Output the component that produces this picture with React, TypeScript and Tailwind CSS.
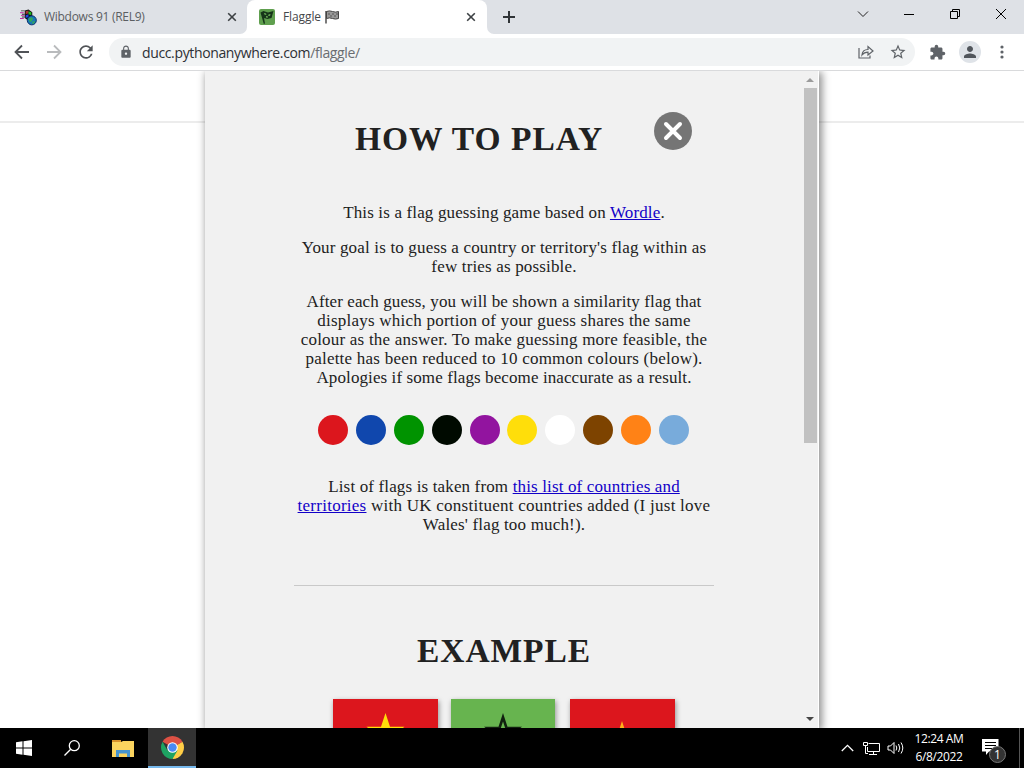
import { ReactNode } from "react";
import { MdExtension, MdLock, MdPerson, MdRefresh, MdStarBorder } from "react-icons/md";

const COLOURS = [
  "bg-[#dc161d]",
  "bg-[#1047ad]",
  "bg-[#009300]",
  "bg-[#000a00]",
  "bg-[#92149f]",
  "bg-[#ffde0a]",
  "bg-[#ffffff]",
  "bg-[#7d4300]",
  "bg-[#ff8216]",
  "bg-[#78abdb]",
];

const TabClose = () => (
  <svg width="10" height="10" viewBox="0 0 10 10" stroke="#3c4043" strokeWidth="1.6">
    <path d="M1.2 1.2l7.6 7.6M8.8 1.2L1.2 8.8" />
  </svg>
);

const GlobeIcon = () => (
  <svg width="17" height="17" viewBox="0 0 18 17">
    <path d="M5 1l4-1 4 3v8l-4 1-4-3z" fill="#111" />
    <path d="M0 3h4v1H0zM1 6h4v1H1zM0 9h4v1H0z" fill="#c22ba0" />
    <path d="M1 1h4v1H1zM2 4.500h3v1H2zM2 7.500h3v1H2z" fill="#333" />
    <path d="M6 2l3-1v3L6 5z" fill="#a33" />
    <path d="M9 2l3 1v3L9 5z" fill="#2b2" />
    <path d="M6 6l3-1v3L6 9z" fill="#24d" />
    <circle cx="12.500" cy="11.500" r="4.800" fill="#1678b8" stroke="#092c66" />
    <path d="M9 10l3-2 2 2-2 3-2 0zM13 13l3-1-1 2.500-2 1z" fill="#33a65a" />
  </svg>
);

const FlagFavicon = () => (
  <svg width="16" height="16" viewBox="0 0 16 16">
    <rect width="16" height="16" rx="2" fill="#5f9f4e" />
    <path d="M1.500 3.500l3-1.500 4.500 1.500 5.500-1.500-2 7-4 1-3.500-1 1 5.500-1.200.5z" fill="#17351a" />
    <path d="M5 4l2 .5.4 1.500-2-.5zM9.500 5.500l2-.4-.4 1.600-1.900.3zM7 7l2 .5-.3 1.300L7 8.400z" fill="#6db35a" />
  </svg>
);

const ChequeredFlag = () => (
  <svg width="15" height="14" viewBox="0 0 15 14">
    <path d="M1 1v12.500" stroke="#333" strokeWidth="1.300" />
    <path d="M1.500 1.500q3-1.200 6 0t6 0v7q-3 1.200-6 0t-6 0z" fill="#999" stroke="#444" strokeWidth="1" />
    <path d="M3 3h2v2H3zM7 3h2v2H7zM11 3h2v2h-2zM5 5h2v2H5zM9 5h2v2H9z" fill="#777" />
  </svg>
);

const TabStrip = () => (
  <div className="flex h-[34px] bg-[#dee1e6] text-[12px]">
    <div className="flex w-[247px] items-center pl-5 text-[#5b5e62]">
      <GlobeIcon />
      <span className="ml-[7px] w-[183px] tracking-[-0.28px]">Wibdows 91 (REL9)</span>
      <TabClose />
    </div>
    <div className="relative flex w-60 items-center rounded-t-lg bg-white pl-3 text-[#45484b]">
      <svg width="7" height="7" viewBox="0 0 7 7" fill="#fff" className="absolute bottom-0 -left-[7px]">
        <path d="M7 0v7H0a7 7 0 0 0 7-7z" />
      </svg>
      <svg width="7" height="7" viewBox="0 0 7 7" fill="#fff" className="absolute -right-[7px] bottom-0">
        <path d="M0 0v7h7a7 7 0 0 1-7-7z" />
      </svg>
      <FlagFavicon />
      <span className="ml-2 w-[42px] tracking-[-0.1px]">Flaggle</span>
      <ChequeredFlag />
      <span className="ml-[126px]">
        <TabClose />
      </span>
    </div>
    <div className="flex flex-1 items-center pl-4">
      <svg width="12" height="12" viewBox="0 0 12 12" stroke="#303437" strokeWidth="2">
        <path d="M6 0v12M0 6h12" />
      </svg>
      <div className="ml-auto flex pb-[6px]">
        <svg width="12" height="12" viewBox="0 0 12 12" fill="none" stroke="#222" className="mr-[34px]">
          <path d="M1 3.500l5 5 5-5" />
        </svg>
        <svg width="12" height="12" viewBox="0 0 12 12" stroke="#000" className="mr-[34px]">
          <path d="M1 6.500h10" />
        </svg>
        <svg width="12" height="12" viewBox="0 0 12 12" fill="none" stroke="#000" className="mr-[34px]">
          <path d="M1.500 3.500h7v7h-7zM3.500 3V1.500h7v7H9" />
        </svg>
        <svg width="12" height="12" viewBox="0 0 12 12" stroke="#000" className="mr-[17px]">
          <path d="M1 1l10 10M11 1L1 11" />
        </svg>
      </div>
    </div>
  </div>
);

const Toolbar = () => (
  <div className="flex h-[37px] items-center border-b border-[#d9dadc] bg-white">
    <svg width="16" height="16" viewBox="0 0 16 16" fill="none" stroke="#505357" strokeWidth="1.8" className="ml-[14px]">
      <path d="M15 8H2M8 1.500L1.500 8 8 14.500" />
    </svg>
    <svg width="16" height="16" viewBox="0 0 16 16" fill="none" stroke="#b9bbbd" strokeWidth="1.8" className="ml-4">
      <path d="M1 8h13M8 1.500L14.500 8 8 14.500" />
    </svg>
    <MdRefresh size={20} className="ml-[14px] text-[#505357]" />
    <div className="ml-[13px] flex h-7 w-[806px] items-center rounded-full bg-[#f1f3f4] pl-[10px]">
      <MdLock size={14} className="text-[#5f6368]" />
      <span className="ml-[9px] text-[14px] tracking-[-0.36px] text-[#2d3034]">
        ducc.pythonanywhere.com<span className="text-[#6a6d71]">/flaggle/</span>
      </span>
      <svg width="16" height="14" viewBox="0 0 16 14" fill="none" stroke="#5f6368" strokeWidth="1.2" className="mr-[15px] ml-auto">
        <path d="M1 3v10h11v-2.500" />
        <path d="M4 10c.3-4 2.500-5.500 6-5.500V1.500L15 6l-5 4V7.200C7 7.200 5.500 8 4 10z" />
      </svg>
      <MdStarBorder size={18} className="mr-2 text-[#5f6368]" />
    </div>
    <MdExtension size={17} className="ml-[14px] text-[#5f6368]" />
    <div className="ml-[13px] flex size-[22px] items-center justify-center rounded-full bg-[#dfe3e8]">
      <MdPerson size={18} className="text-[#51565c]" />
    </div>
    <svg width="4" height="14" viewBox="0 0 4 14" fill="#5f6368" className="ml-[19px]">
      <circle cx="2" cy="2" r="1.6" />
      <circle cx="2" cy="7" r="1.6" />
      <circle cx="2" cy="12" r="1.6" />
    </svg>
  </div>
);

const Link = ({ children }: { children: ReactNode }) => (
  <a href="#" className="text-[#1200c8] underline">
    {children}
  </a>
);

const STAR =
  "0,-20 4.49,-6.18 19.02,-6.18 7.27,2.36 11.76,16.18 0,7.64 -11.76,16.18 -7.27,2.36 -19.02,-6.18 -4.49,-6.18";

const Modal = () => (
  <div className="absolute top-0 left-[205px] flex h-[657px] w-[614px] bg-[#f1f1f1] shadow-[2px_2px_8px_1px_rgba(0,0,0,0.45)]">
    <div className="h-full w-[597px] overflow-hidden pl-[89px] font-['Liberation_Serif',serif] text-[17px] leading-[19px] text-[#212121]">
      <div className="flex w-[420px] flex-col text-center whitespace-nowrap">
        <div className="flex h-[132px] pt-[41px]">
          <h1 className="ml-[61px] w-[250px] pt-[7px] text-left text-[33.500px] leading-[40px] font-bold tracking-[1px]">
            HOW TO PLAY
          </h1>
          <svg width="38" height="38" viewBox="0 0 38 38" className="ml-[49px]">
            <circle cx="19" cy="19" r="19" fill="#757575" />
            <path d="M12 12l14 14M26 12l-14 14" stroke="#fff" strokeWidth="4" strokeLinecap="round" />
          </svg>
        </div>
        <p className="tracking-[0.145px]">
          This is a flag guessing game based on <Link>Wordle</Link>.
        </p>
        <p className="mt-4 tracking-[0.165px]">
          Your goal is to guess a country or territory's flag within as
          <br />
          few tries as possible.
        </p>
        <p className="mt-4">
          <span className="tracking-[0.11px]">After each guess, you will be shown a similarity flag that</span>
          <br />
          <span className="tracking-[0.225px]">displays which portion of your guess shares the same</span>
          <br />
          <span className="tracking-[0.21px]">colour as the answer. To make guessing more feasible, the</span>
          <br />
          <span className="tracking-[0.23px]">palette has been reduced to 10 common colours (below).</span>
          <br />
          <span className="tracking-[0.1px]">Apologies if some flags become inaccurate as a result.</span>
        </p>
        <div className="mt-[28px] flex justify-between pr-[25px] pl-6">
          {COLOURS.map((c) => (
            <div key={c} className={`size-[30px] rounded-full ${c}`} />
          ))}
        </div>
        <p className="mt-[32px]">
          <span className="tracking-[0.145px]">
            List of flags is taken from <Link>this list of countries and</Link>
          </span>
          <br />
          <span className="tracking-[0.255px]">
            <Link>territories</Link> with UK constituent countries added (I just love
          </span>
          <br />
          <span className="tracking-[0.17px]">Wales' flag too much!).</span>
        </p>
        <hr className="mt-[51px] border-[#c9c9c9]" />
        <h1 className="mt-[45px] text-[33.500px] leading-[40px] font-bold tracking-[0.9px]">EXAMPLE</h1>
        <div className="mt-[28px] flex pl-[39px]">
          <svg width="105" height="70" className="bg-[#dc161d] shadow-[1px_2px_5px_rgba(0,0,0,0.4)]">
            <polygon points={STAR} transform="translate(52.5 34)" fill="#ffde0a" />
          </svg>
          <svg width="104" height="70" className="ml-[13px] bg-[#67b44f] shadow-[1px_2px_5px_rgba(0,0,0,0.4)]">
            <polygon points={STAR} transform="translate(52 34)" fill="#11200f" />
            <polygon points={STAR} transform="translate(52 38) scale(.78)" fill="#67b44f" />
          </svg>
          <svg width="105" height="70" className="ml-[15px] bg-[#dc161d] shadow-[1px_2px_5px_rgba(0,0,0,0.4)]">
            <polygon points={STAR} transform="translate(52 42)" fill="#ffb01a" />
          </svg>
        </div>
      </div>
    </div>
    <div className="flex w-[17px] flex-col items-center border-r border-white bg-[#f1f1f1] pt-[7px] pb-[7px]">
      <svg width="8" height="4" viewBox="0 0 8 4" fill="#9b9b9b">
        <path d="M0 4l4-4 4 4z" />
      </svg>
      <div className="mt-[6px] h-[355px] w-[13px] bg-[#c1c1c1]" />
      <svg width="8" height="4" viewBox="0 0 8 4" fill="#454545" className="mt-auto">
        <path d="M0 0l4 4 4-4z" />
      </svg>
    </div>
  </div>
);

const Taskbar = () => (
  <div className="flex h-10 items-center bg-black text-white">
    <svg width="16" height="16" viewBox="0 0 16 16" fill="#fff" className="ml-4">
      <path d="M0 2.200l6.500-.9v6.200H0zM7.500 1.200L16 0v7.500H7.500zM0 8.500h6.500v6.200L0 13.800zM7.500 8.500H16V16l-8.500-1.200z" />
    </svg>
    <svg width="16" height="16" viewBox="0 0 16 16" fill="none" stroke="#fff" strokeWidth="1.300" className="ml-8">
      <circle cx="10.300" cy="5.700" r="5" />
      <path d="M6.700 9.300L.5 15.500" />
    </svg>
    <svg width="22" height="19" viewBox="0 0 22 19" className="ml-8">
      <path d="M0 1h9v4H0z" fill="#d8922c" />
      <path d="M0 3h9l2-1h11v16H0z" fill="#fbd45f" />
      <path d="M4 11h14v7h-3v-3.500H7V18H4z" fill="#4694cf" />
      <path d="M9.500 15.500h3V18h-3z" fill="#fbd45f" />
    </svg>
    <div className="ml-[14px] flex h-10 w-12 items-center justify-center border-b-2 border-[#76b9ed] bg-[#333]">
      <svg width="23" height="23" viewBox="0 0 24 24">
        <path d="M12 12L1.610 6A12 12 0 0 1 22.390 6z" fill="#dd5144" />
        <path d="M12 12L22.390 6A12 12 0 0 1 12 24z" fill="#ffcd46" />
        <path d="M12 12l5.200 3L12 24A12 12 0 0 1 1.610 6l5.200 9z" fill="#1ea362" />
        <path d="M12 6h10.390L12 12z" fill="#dd5144" />
        <circle cx="12" cy="12" r="5.500" fill="#fff" />
        <circle cx="12" cy="12" r="4.400" fill="#4a8af4" />
      </svg>
    </div>
    <svg width="13" height="8" viewBox="0 0 13 8" fill="none" stroke="#fff" strokeWidth="1.300" className="ml-auto">
      <path d="M.8 7l5.700-5.700L12.200 7" />
    </svg>
    <svg width="17" height="15" viewBox="0 0 17 15" fill="none" stroke="#fff" className="ml-[9px]">
      <path d="M5.500 2.500h11v8h-12V6M10.500 10.500v3M6 13.500h8M.5 1.500h4v3h-4zM2.500 4.500v8H5" />
    </svg>
    <svg width="18" height="14" viewBox="0 0 18 14" fill="none" stroke="#fff" className="ml-[7px]">
      <path d="M1 5v4h2.500L7 12.500v-11L3.500 5zM9 4.500q1.600 2.500 0 5M11.500 3q2.600 4 0 8M14 1.500q3.600 5.500 0 11" />
    </svg>
    <div className="ml-[8px] w-[52px] text-center text-[12px] leading-[18px] whitespace-nowrap">
      <div className="tracking-[-0.4px]">12:24 AM</div>
      <div className="tracking-[-0.4px]">6/8/2022</div>
    </div>
    <div className="relative ml-[17px] h-6 w-[25px]">
      <svg width="17" height="19" viewBox="0 0 17 19">
        <path d="M0 3h16.500v12.500H7L4 19v-3.500H0z" fill="#fff" />
        <path d="M3 6.500h11M3 9.500h11M3 12.500h7" stroke="#000" />
      </svg>
      <div className="absolute top-[10px] left-[7px] flex size-[17px] items-center justify-center rounded-full border border-[#777] bg-[#333] text-[12px] leading-none">
        1
      </div>
    </div>
    <div className="ml-[12px] h-10 w-px bg-[#555]" />
    <div className="w-[4px]" />
  </div>
);

export default function App() {
  return (
    <div className="flex h-[768px] w-[1024px] flex-col overflow-hidden bg-white font-['Open_Sans',sans-serif]">
      <TabStrip />
      <Toolbar />
      <main className="relative flex-1 overflow-hidden bg-white">
        <div className="h-[52px] border-b-2 border-[#ececec]" />
        <Modal />
      </main>
      <Taskbar />
    </div>
  );
}
